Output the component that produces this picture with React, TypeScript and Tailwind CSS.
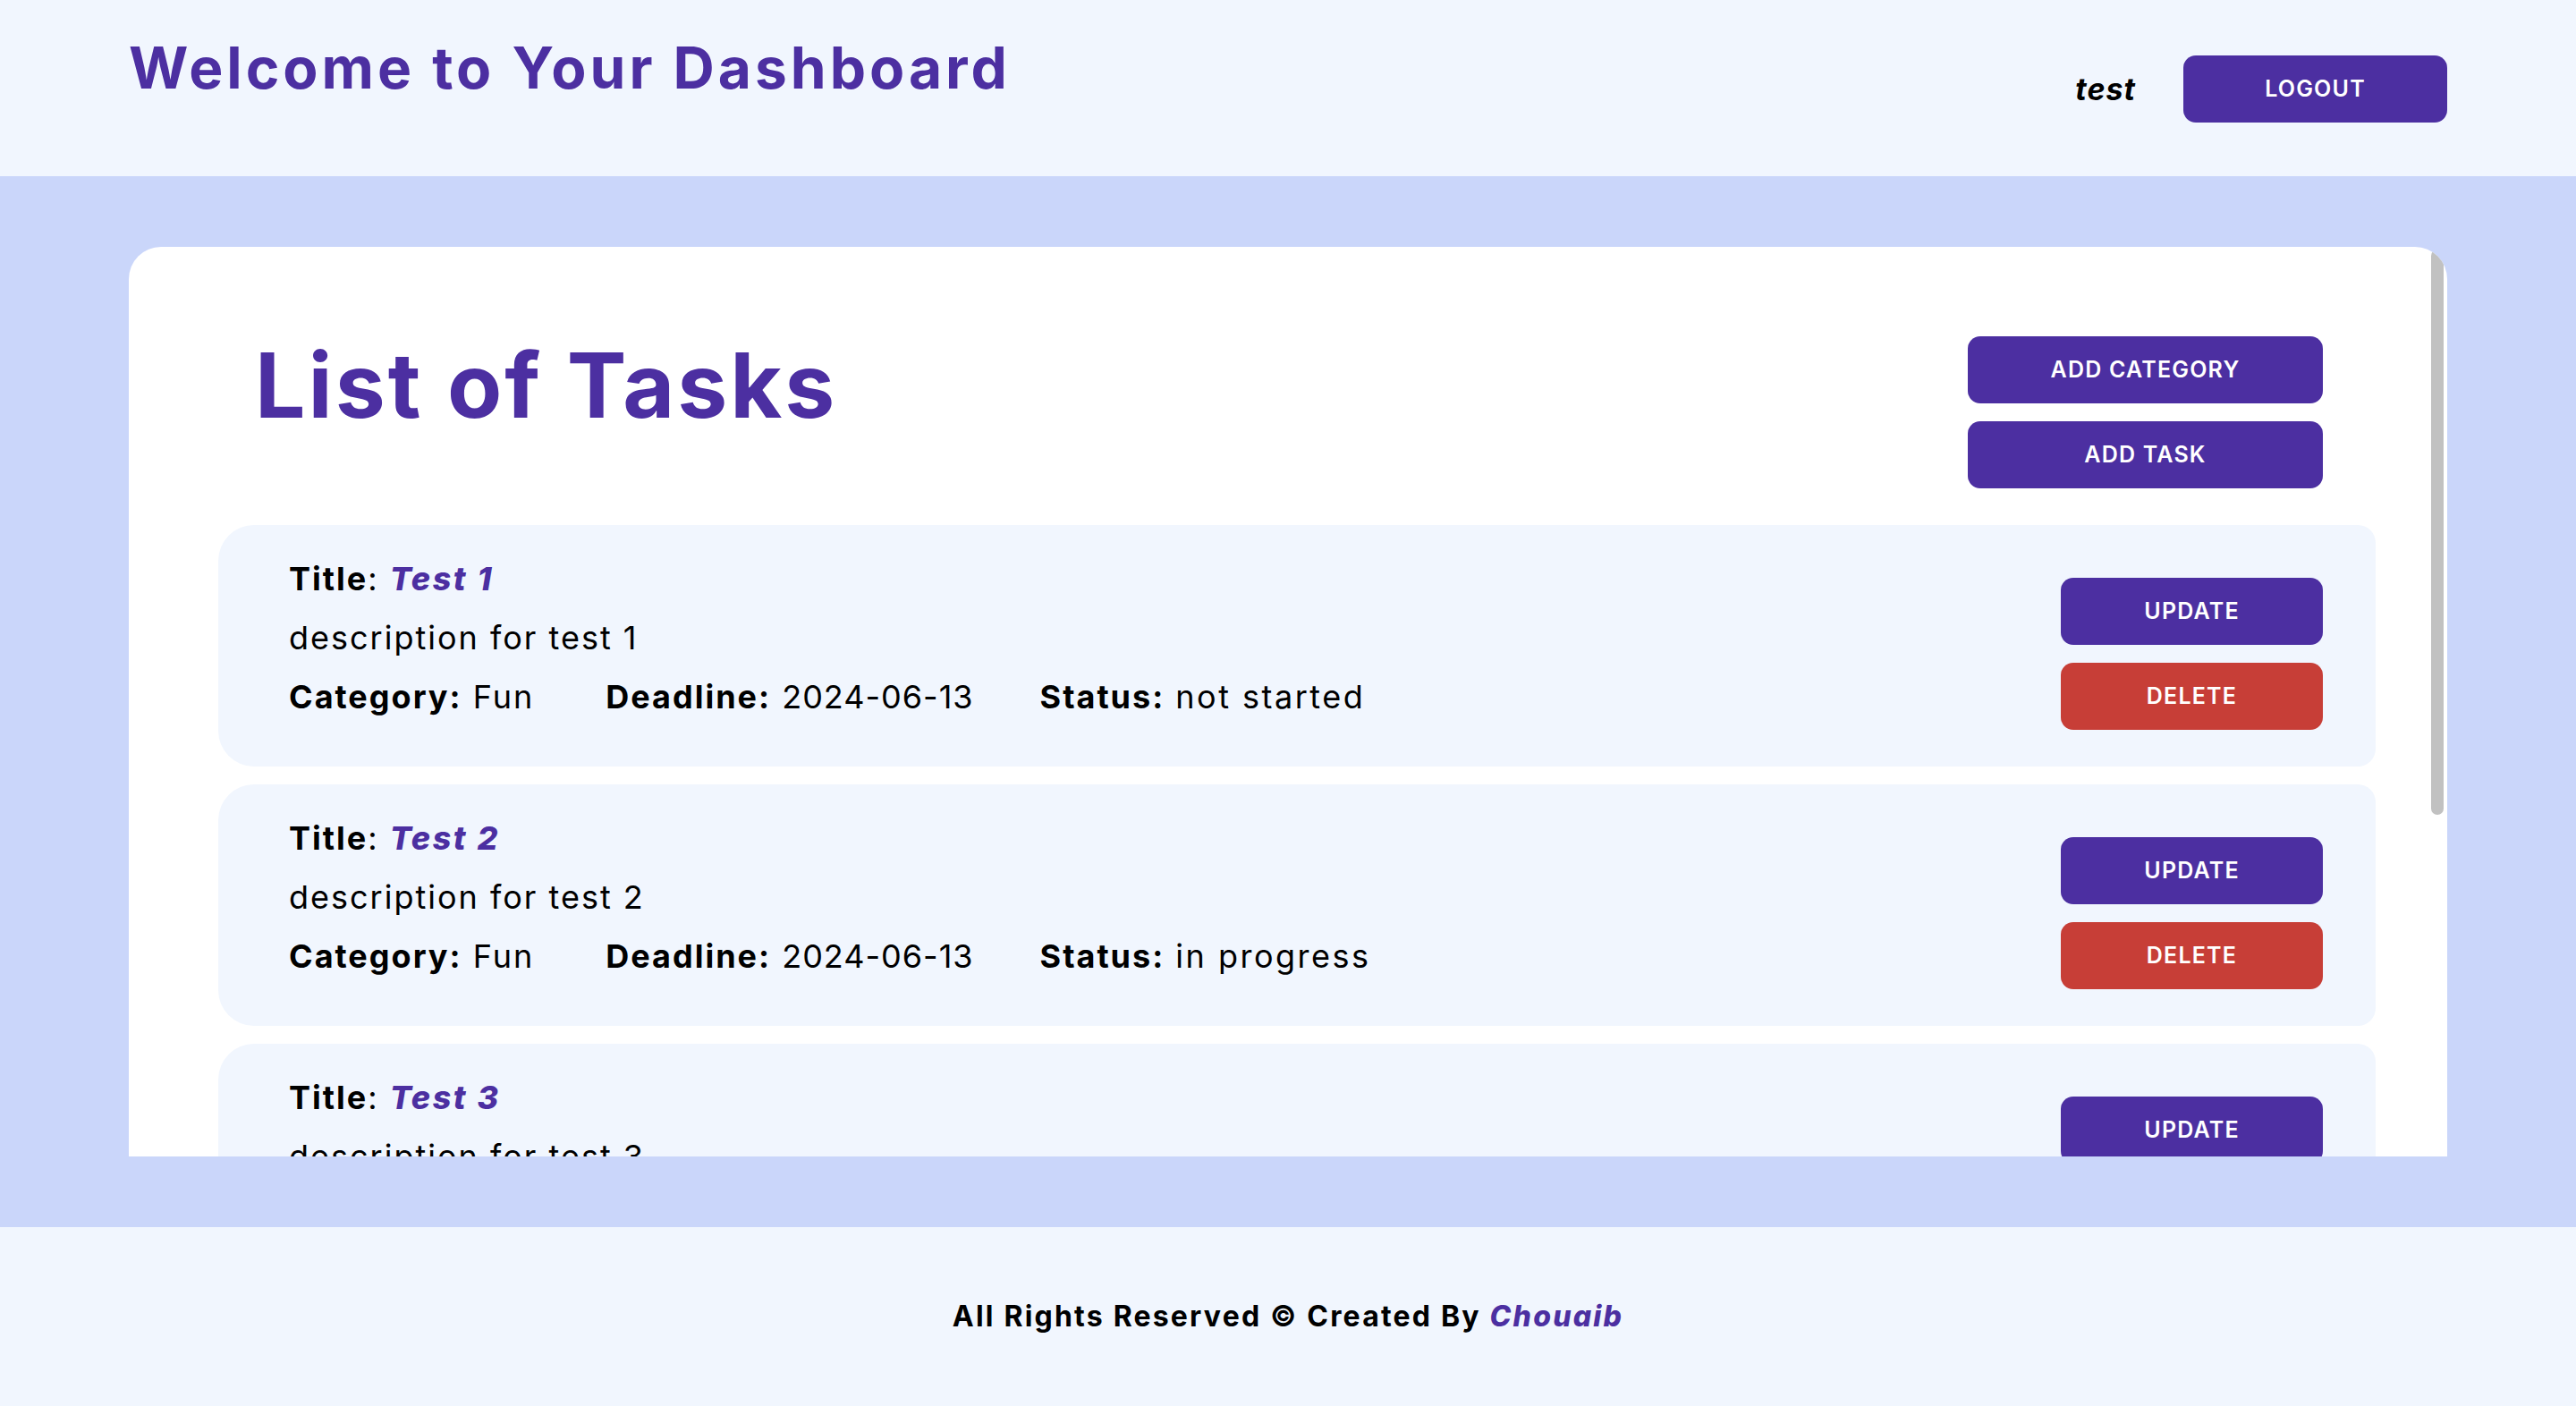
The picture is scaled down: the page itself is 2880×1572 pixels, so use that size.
import React from "react";

interface Task {
  title: string;
  description: string;
  category: string;
  deadline: string;
  status: string;
}

const tasks: Task[] = [
  { title: "Test 1", description: "description for test 1", category: "Fun", deadline: "2024-06-13", status: "not started" },
  { title: "Test 2", description: "description for test 2", category: "Fun", deadline: "2024-06-13", status: "in progress" },
  { title: "Test 3", description: "description for test 3", category: "Fun", deadline: "2024-06-13", status: "not started" },
];

function TaskCard({ task }: { task: Task }) {
  return (
    <div className="flex shrink-0 justify-between h-[270px] bg-[#f1f6fe] rounded-l-[40px] rounded-r-[20px]">
      <div className="pl-[79px] pt-[27px] text-[36px] leading-[66px] tracking-[2px] text-black">
        <p>
          <span className="font-bold">Title</span>: <span className="font-extrabold italic tracking-[2.5px] text-[#4c2fa1]">{task.title}</span>
        </p>
        <p>{task.description}</p>
        <p className="flex">
          <span className="mr-[80px]">
            <span className="font-bold">Category:</span> {task.category}
          </span>
          <span className="mr-[74px]">
            <span className="font-bold">Deadline:</span> <span className="tracking-[1px]">{task.deadline}</span>
          </span>
          <span>
            <span className="font-bold">Status:</span> <span className="tracking-[2.5px]">{task.status}</span>
          </span>
        </p>
      </div>
      <div className="pr-[59px] pt-[59px] flex flex-col gap-[20px]">
        <button className="w-[293px] h-[75px] rounded-[14px] bg-[#4c2fa1] text-white text-[25px] tracking-[1.2px] font-semibold">
          UPDATE
        </button>
        <button className="w-[293px] h-[75px] rounded-[14px] bg-[#c73e37] text-white text-[25px] tracking-[1.2px] font-semibold">
          DELETE
        </button>
      </div>
    </div>
  );
}

export default function App() {
  return (
    <div className="flex flex-col min-h-screen font-['Inter','Liberation_Sans',sans-serif]">
      <header className="h-[197px] bg-[#f1f6fe] flex justify-between px-[144px]">
        <h1 className="pt-[44px] text-[64px] leading-none tracking-[4px] font-bold text-[#4c2fa1]">Welcome to Your Dashboard</h1>
        <div className="flex items-center gap-[53px] h-[75px] mt-[62px]">
          <span className="text-[34px] font-bold italic tracking-[1px] text-black">test</span>
          <button className="w-[295px] h-[75px] rounded-[14px] bg-[#4c2fa1] text-white text-[25px] tracking-[1.2px] font-semibold">
            LOGOUT
          </button>
        </div>
      </header>

      <main className="bg-[#cad6fa] px-[144px] py-[79px]">
        <div className="flex h-[1017px] bg-white rounded-t-[36px] overflow-hidden">
          <div className="flex-1 flex flex-col pl-[100px] pr-[62px] min-w-0">
            <div className="flex justify-between items-start pt-[100px] pl-[41px] pr-[59px]">
              <h1 className="mt-[5px] text-[100px] leading-none tracking-[3px] font-bold text-[#4c2fa1]">List of Tasks</h1>
              <div className="flex flex-col gap-[20px]">
                <button className="w-[397px] h-[75px] rounded-[14px] bg-[#4c2fa1] text-white text-[25px] tracking-[1.2px] font-semibold">
                  ADD CATEGORY
                </button>
                <button className="w-[397px] h-[75px] rounded-[14px] bg-[#4c2fa1] text-white text-[25px] tracking-[1.2px] font-semibold">
                  ADD TASK
                </button>
              </div>
            </div>
            <div className="flex flex-col gap-[20px] mt-[41px]">
              {tasks.map((t) => (
                <TaskCard key={t.title} task={t} />
              ))}
            </div>
          </div>
          {/* scrollbar */}
          <div className="w-[18px] shrink-0 pt-[3px] pr-[4px]">
            <div className="h-[632px] w-[14px] rounded-full bg-[#c1c1c1]" />
          </div>
        </div>
      </main>

      <footer className="h-[200px] bg-[#f1f6fe] flex items-center justify-center">
        <p className="text-[32px] font-bold tracking-[2.2px] text-black">
          All Rights Reserved © Created By <span className="font-extrabold italic text-[#4c2fa1]">Chouaib</span>
        </p>
      </footer>
    </div>
  );
}
